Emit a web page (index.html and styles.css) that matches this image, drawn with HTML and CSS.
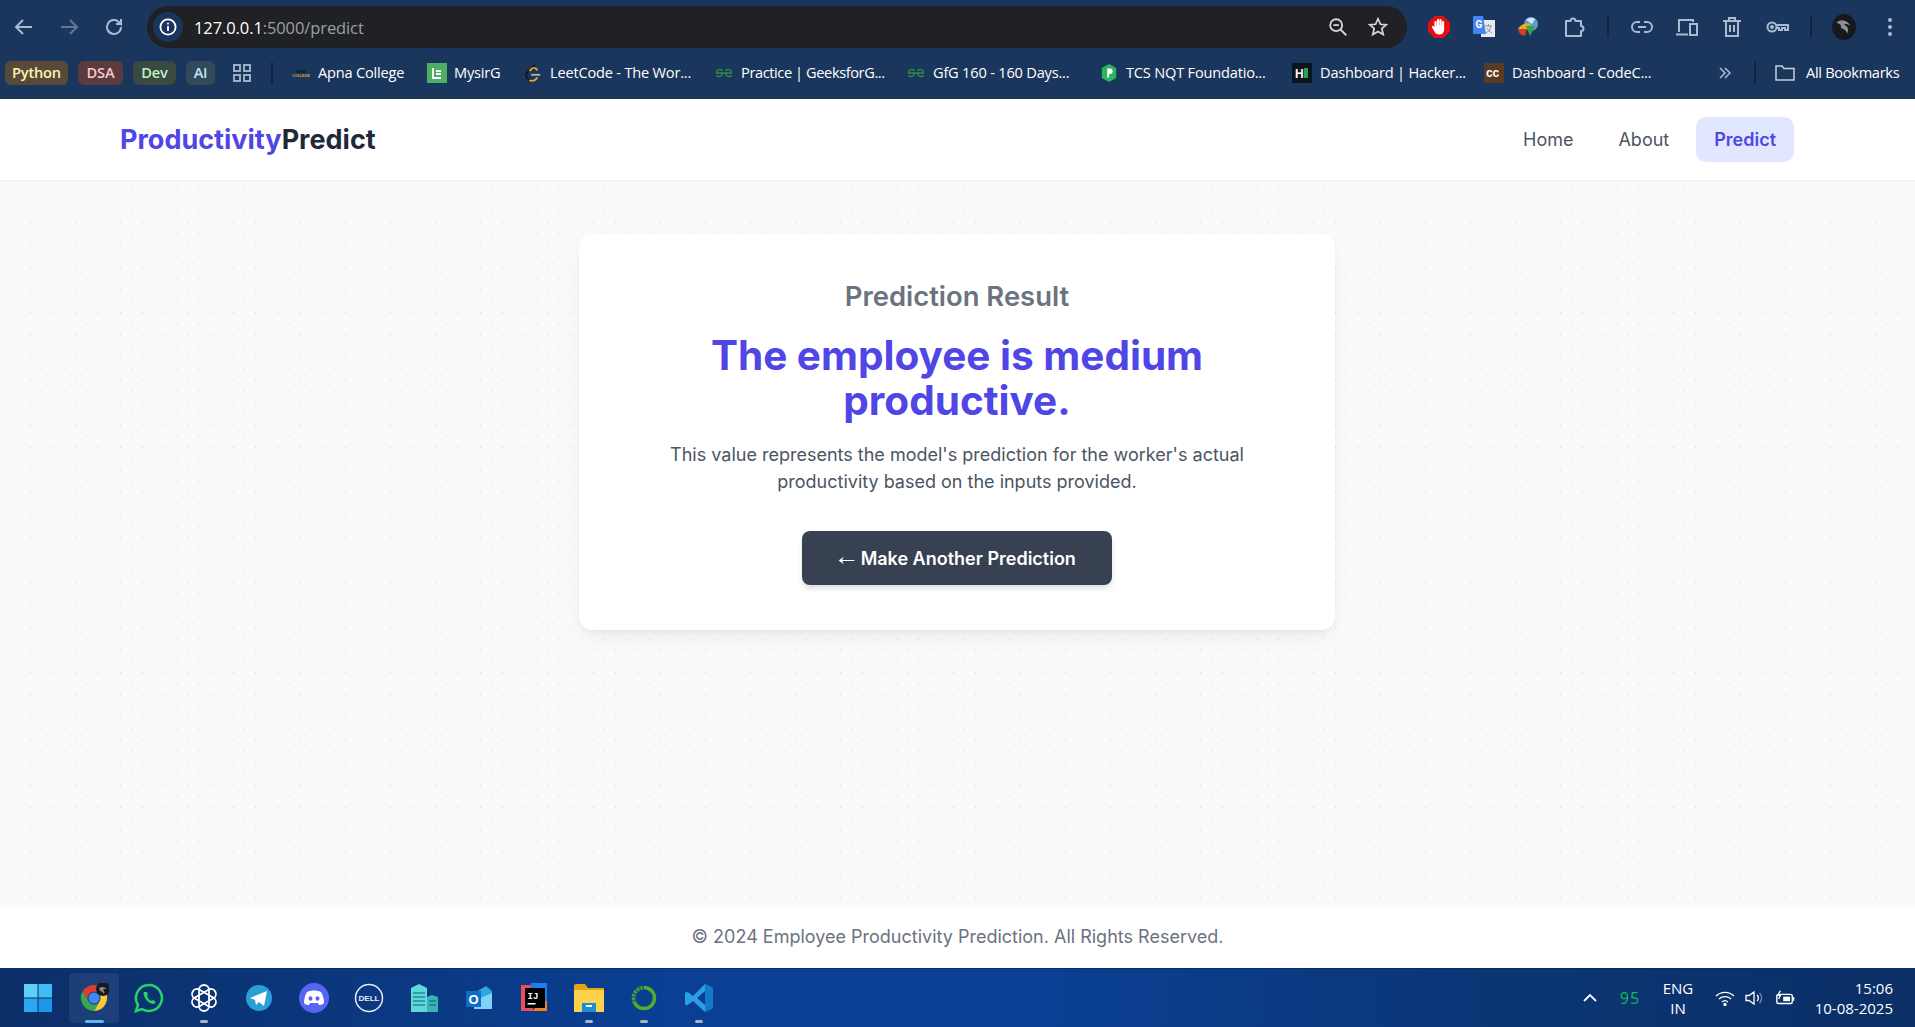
FILE: index.html
```html
<!DOCTYPE html>
<html lang="en">
<head>
<meta charset="utf-8">
<title>Prediction Result</title>
<link rel="stylesheet" href="styles.css">
</head>
<body>
<header class="browser">
  <div class="toolbar">
    <div class="tool-group nav-tools">
      <svg class="ti" viewBox="0 0 24 24" fill="none" stroke="#a9bad2" stroke-width="2"><path d="M20 12H5M11 5l-7 7 7 7"/></svg>
      <svg class="ti" viewBox="0 0 24 24" fill="none" stroke="#5f7799" stroke-width="2"><path d="M4 12h15M13 5l7 7-7 7"/></svg>
      <svg class="ti" viewBox="0 0 24 24" fill="none" stroke="#a9bad2" stroke-width="2"><path d="M19 12a7 7 0 1 1-2.2-5.1L19 9V4M19 9h-5"/></svg>
    </div>
    <div class="omnibox">
      <span class="site-info"><svg width="20" height="20" viewBox="0 0 20 20" fill="none" stroke="#fff" stroke-width="1.8"><circle cx="10" cy="10" r="7.6"/><path d="M10 9v5M10 5.8v1.8"/></svg></span>
      <span class="url"><span class="url-host">127.0.0.1</span>:5000/predict</span>
      <svg class="oi oi-zoom" viewBox="0 0 24 24" fill="none" stroke="#d5d7da" stroke-width="2"><circle cx="10" cy="10" r="6.5"/><path d="M7 10h6M15 15l6 6"/></svg>
      <svg class="oi" viewBox="0 0 24 24" fill="none" stroke="#d5d7da" stroke-width="1.9"><path d="M12 3l2.7 6 6.3.6-4.8 4.2 1.5 6.4L12 16.8 6.3 20.2l1.5-6.4L3 9.6 9.3 9z"/></svg>
    </div>
    <div class="tool-group ext-tools">
      <svg class="ti" viewBox="0 0 24 24"><path d="M7.500 1h9L23 7.500v9L16.500 23h-9L1 16.500v-9z" fill="#e20f13"/><g stroke="#fff" stroke-width="2.200" stroke-linecap="round"><path d="M8.500 7v7M11 5v8M13.500 5v8M16 7v8"/><path d="M6 12l3 5"/></g><ellipse cx="12.300" cy="15" rx="4.700" ry="4.500" fill="#fff"/></svg>
      <svg class="ti" viewBox="0 0 24 24"><rect x="9" y="5" width="14" height="17" fill="#e8eaed"/><path d="M13 11h7M16.500 9v2M19 11c-1 4-3 6-5 7M15 13c1 2 3 4 5 5" stroke="#8a8f96" fill="none"/><path d="M1 2a1 1 0 0 1 1-1h9l3 18H2a1 1 0 0 1-1-1z" fill="#4285f4"/><text x="3.500" y="13" font-family="Roboto" font-size="10" font-weight="700" fill="#fff">G</text></svg>
      <svg class="ti" viewBox="0 0 24 24"><circle cx="14" cy="9" r="7" fill="#5d9ad6"/><path d="M9 5a7 7 0 0 1 9-1l-3 5z" fill="#d5e4f2"/><path d="M1 14a10 8 0 0 1 13-5l-4 5z" fill="#e0b020"/><path d="M1 14a8 8 0 0 0 7 7l2-7z" fill="#d43c24"/><path d="M9 11h9l-5 10z" fill="#3ea63a"/></svg>
      <svg class="ti" viewBox="0 0 24 24" fill="none" stroke="#a9bad2" stroke-width="2"><path d="M4 6h4.500a2.500 2.500 0 0 1 5 0H19v5a2.500 2.500 0 0 1 0 5v5H4z" stroke-linejoin="round"/></svg>
      <span class="sep"></span>
      <svg class="ti" viewBox="0 0 24 24" fill="none" stroke="#a9bad2" stroke-width="2"><path d="M10 7H7a5 5 0 0 0 0 10h3M14 7h3a5 5 0 0 1 0 10h-3M8 12h8"/></svg>
      <svg class="ti" viewBox="0 0 24 24" fill="none" stroke="#a9bad2" stroke-width="2"><path d="M4 17V5h14v2M1 19.500h12M15 9h7v11h-7z"/></svg>
      <svg class="ti" viewBox="0 0 24 24" fill="none" stroke="#a9bad2" stroke-width="2"><path d="M3 6h18M9 6V3h6v3M6 6v15h12V6M10 10v7M14 10v7"/></svg>
      <svg class="ti" viewBox="0 0 24 24" fill="none" stroke="#a9bad2" stroke-width="2"><circle cx="7" cy="12" r="4.500"/><circle cx="7" cy="12" r="1"/><path d="M11.500 10H23v5h-3v-2h-3v2h-3v-2h-2.500"/></svg>
      <span class="sep"></span>
      <svg class="ti avatar" viewBox="0 0 24 24"><ellipse cx="12" cy="12" rx="11" ry="12" fill="#16181b"/><path d="M5 8c5-4 10-2 13 3-3-2-5-2-6-1 3 1 5 4 3 8-1-3-3-4-6-5 1-2 0-4-4-5z" fill="#8a9096"/></svg>
      <svg class="ti" viewBox="0 0 24 24" fill="#a9bad2"><circle cx="12" cy="5" r="2"/><circle cx="12" cy="12" r="2"/><circle cx="12" cy="19" r="2"/></svg>
    </div>
  </div>
  <div class="bookmarks">
    <span class="chip chip-python">Python</span>
    <span class="chip chip-dsa">DSA</span>
    <span class="chip chip-dev">Dev</span>
    <span class="chip chip-ai">AI</span>
    <svg class="apps" viewBox="0 0 18 18" fill="none" stroke="#a9bad2" stroke-width="1.800"><rect x="1" y="1" width="6" height="6"/><rect x="11" y="1" width="6" height="6"/><rect x="1" y="11" width="6" height="6"/><rect x="11" y="11" width="6" height="6"/></svg>
    <span class="sep sep-apps"></span>
    <span class="bm bm-apna"><svg class="fav" viewBox="0 0 18 18"><text x="9" y="8.500" text-anchor="middle" font-family="Liberation Sans" font-size="3.600" font-weight="700" fill="#0e1420">APNA</text><text x="9" y="12.500" text-anchor="middle" font-family="Liberation Sans" font-size="3.900" font-weight="700" fill="#e0a020">COLLEGE</text></svg>Apna College</span>
    <span class="bm bm-mysir"><svg class="fav" viewBox="0 0 20 20"><rect width="20" height="20" fill="#4caf63"/><path d="M6 5v10h8M9 8h5M9 11h5" stroke="#fff" stroke-width="1.800" fill="none"/></svg>MysirG</span>
    <span class="bm bm-leet"><svg class="fav" viewBox="0 0 18 20" fill="none" stroke-width="2"><path d="M11 1L3 9c-2 2-2 5 0 7l2 2" stroke="#111"/><path d="M5 8l3-3c1-1 3-1 4 0l2 2M5 18c2 1 5 1 7-1l2-2" stroke="#f0a020"/><path d="M7 12h10" stroke="#b3b3b3"/></svg>LeetCode - The Wor...</span>
    <span class="bm bm-gfg"><svg class="fav" viewBox="0 0 20 12" fill="none" stroke="#2f8d46" stroke-width="1.500"><path d="M10 6H1.500a4 4 0 0 1 7-2.500M10 6h8.500a4 4 0 0 0-7-2.500M8.500 6a4 4 0 0 1-7 2.500M11.500 6a4 4 0 0 0 7 2.500"/></svg>Practice | GeeksforG...</span>
    <span class="bm bm-gfg2"><svg class="fav" viewBox="0 0 20 12" fill="none" stroke="#2f8d46" stroke-width="1.500"><path d="M10 6H1.500a4 4 0 0 1 7-2.500M10 6h8.500a4 4 0 0 0-7-2.500M8.500 6a4 4 0 0 1-7 2.500M11.500 6a4 4 0 0 0 7 2.500"/></svg>GfG 160 - 160 Days...</span>
    <span class="bm bm-tcs"><svg class="fav" viewBox="0 0 18 20"><path d="M9 0l8 4.500v11L9 20l-8-4.500v-11z" fill="#2bb55d"/><path d="M7 5h3a3 3 0 0 1 0 6H9v4H7z" fill="#fff"/></svg>TCS NQT Foundatio...</span>
    <span class="bm bm-hr"><svg class="fav" viewBox="0 0 20 20"><rect width="20" height="20" fill="#0e141e"/><text x="3" y="14.500" font-family="Liberation Sans" font-size="12" font-weight="700" fill="#fff">H</text><rect x="12" y="5" width="4" height="10" fill="#1ba94c"/></svg>Dashboard | Hacker...</span>
    <span class="bm bm-cc"><svg class="fav" viewBox="0 0 20 20"><rect width="20" height="20" fill="#5b3a22"/><text x="2" y="14" font-family="Liberation Sans" font-size="12" font-weight="700" fill="#fff">cc</text></svg>Dashboard - CodeC...</span>
    <svg class="more" viewBox="0 0 14 14" fill="none" stroke="#a9bad2" stroke-width="1.500"><path d="M2 2l5 5-5 5M7 2l5 5-5 5"/></svg>
    <span class="sep sep-all"></span>
    <span class="bm bm-all"><svg class="folder" viewBox="0 0 20 18" fill="none" stroke="#c5cfdd" stroke-width="1.500"><path d="M1 2h6l2 2.500h10V16H1z"/></svg>All Bookmarks</span>
  </div>
</header>

<nav class="navbar">
  <a class="logo"><span class="logo-accent">Productivity</span>Predict</a>
  <div class="nav-links">
    <a class="nav-link">Home</a>
    <a class="nav-link">About</a>
    <a class="nav-link is-active">Predict</a>
  </div>
</nav>

<main class="content">
  <section class="card">
    <h2 class="card-label">Prediction Result</h2>
    <h1 class="card-result">The employee is medium productive.</h1>
    <p class="card-text">This value represents the model's prediction for the worker's actual productivity based on the inputs provided.</p>
    <a class="button"><span class="arrow">&larr;</span> Make Another Prediction</a>
  </section>
</main>

<footer class="footer">&copy; 2024 Employee Productivity Prediction. All Rights Reserved.</footer>

<div class="taskbar">
  <div class="task-icons">
    <span class="task"><svg class="tsk-img tsk-win" viewBox="0 0 30 30"><rect x="1" y="1" width="13.500" height="13.500" fill="#5fd0f5"/><rect x="15.500" y="1" width="13.500" height="13.500" fill="#3fbdf2"/><rect x="1" y="15.500" width="13.500" height="13.500" fill="#2ba9ee"/><rect x="15.500" y="15.500" width="13.500" height="13.500" fill="#1b96e8"/></svg></span>
    <span class="task is-open"><svg class="tsk-img" viewBox="0 0 30 30"><path d="M15 2a13 13 0 0 1 11.300 6.500H15z" fill="#e33b2e"/><path d="M3.700 8.500A13 13 0 0 1 15 2v6.500a6.500 6.500 0 0 0-5.600 9.700L3.700 8.500z" fill="#e33b2e"/><path d="M26.300 8.500A13 13 0 0 1 15 28l5.600-9.700A6.500 6.500 0 0 0 15 8.500z" fill="#fcc934"/><path d="M3.700 8.500L9.400 18.300a6.500 6.500 0 0 0 11.200 0L15 28A13 13 0 0 1 3.700 8.500z" fill="#34a853"/><circle cx="15" cy="15" r="5.500" fill="#4285f4"/><circle cx="24" cy="6" r="7" fill="#17191c"/><path d="M20 5c3-2 6-1 8 1-2-.5-3 0-4 1 1 1 2 2 1 4-1-2-3-3-4-3z" fill="#888"/></svg><span class="run wide"></span></span>
    <span class="task"><svg class="tsk-img" viewBox="0 0 30 30" fill="none"><path d="M15 2a13 13 0 0 0-11 20L2 28l6-2a13 13 0 1 0 7-24z" stroke="#25d366" stroke-width="2.500"/><path d="M10 9c-2 3 3 11 9 12 2 0 3-2 2-3l-3-1-1 1c-2-1-3-3-4-5l1-1-1-3z" fill="#25d366"/></svg></span>
    <span class="task"><svg class="tsk-img" viewBox="0 0 30 30" fill="none" stroke="#fff" stroke-width="1.800"><rect x="10" y="2" width="10" height="26" rx="5"/><rect x="10" y="2" width="10" height="26" rx="5" transform="rotate(60 15 15)"/><rect x="10" y="2" width="10" height="26" rx="5" transform="rotate(120 15 15)"/></svg><span class="run"></span></span>
    <span class="task"><svg class="tsk-img" viewBox="0 0 30 30"><circle cx="15" cy="15" r="13" fill="#2a9fd6"/><path d="M6 15l17-7-3 15-5-4-3 3-1-5z" fill="#fff"/></svg></span>
    <span class="task"><svg class="tsk-img" viewBox="0 0 30 30"><circle cx="15" cy="15" r="15" fill="#5865f2"/><path d="M8 9c5-2 9-2 14 0 2 3 3 7 3 11-2 2-4 2-5 2l-1-2H11l-1 2c-1 0-3 0-5-2 0-4 1-8 3-11z" fill="#fff"/><ellipse cx="11.500" cy="15.500" rx="2" ry="2.300" fill="#5865f2"/><ellipse cx="18.500" cy="15.500" rx="2" ry="2.300" fill="#5865f2"/></svg></span>
    <span class="task"><svg class="tsk-img" viewBox="0 0 30 30" fill="none"><circle cx="15" cy="15" r="13.500" stroke="#e6edf7" stroke-width="1.500"/><text x="15" y="18" text-anchor="middle" font-family="Liberation Sans" font-size="8" font-weight="700" fill="#e6edf7">DELL</text></svg></span>
    <span class="task"><svg class="tsk-img" viewBox="0 0 30 30"><path d="M2 5l8-4 8 4v24H2z" fill="#5fd8d8"/><path d="M18 14l5-2 6 2v15H18z" fill="#3ab3b8"/><path d="M4 10h12M4 14h12M4 18h12M4 22h12M20 18h7M20 22h7" stroke="#0d5a78" stroke-width="1.200"/></svg></span>
    <span class="task"><svg class="tsk-img" viewBox="0 0 30 30"><path d="M10 10l12-7 6 5v18H10z" fill="#2da7e0"/><path d="M10 18l18-8v16H10z" fill="#7fd3f5"/><rect x="2" y="8" width="15" height="16" fill="#0f6fc6"/><text x="9.500" y="21" text-anchor="middle" font-family="Liberation Sans" font-size="13" font-weight="700" fill="#fff">O</text></svg></span>
    <span class="task"><svg class="tsk-img" viewBox="0 0 30 30"><path d="M2 2h12v26H2z" fill="#f04a5e"/><path d="M12 0h16v20H12z" fill="#1c7ff0"/><path d="M20 18h8v10H14z" fill="#f58020"/><rect x="6" y="5" width="20" height="20" fill="#000"/><text x="8.500" y="16" font-family="Liberation Mono" font-size="9" font-weight="700" fill="#fff">IJ</text><rect x="8.500" y="20" width="8" height="1.500" fill="#fff"/></svg></span>
    <span class="task"><svg class="tsk-img" viewBox="0 0 30 30"><path d="M0 3a2 2 0 0 1 2-2h9l3 4h16v5H0z" fill="#e3a312"/><path d="M0 7h30v22H0z" fill="#fcd24c"/><rect x="8" y="20" width="14" height="9" fill="#1a8fd6"/><rect x="12" y="22" width="6" height="2" fill="#fff"/></svg><span class="run"></span></span>
    <span class="task"><svg class="tsk-img" viewBox="0 0 30 30" fill="none" stroke-width="3.500"><circle cx="15" cy="15" r="10.500" stroke="#4fae2f"/><path d="M15 4.500A10.500 10.500 0 0 0 6 20" stroke="#1a6e54" stroke-dasharray="2 1.500"/></svg><span class="run"></span></span>
    <span class="task"><svg class="tsk-img" viewBox="0 0 30 30"><path d="M21 1l8 4v20l-8 4-12-11-6 4.500-2-1.500V10l2-1.500L9 13z" fill="#2a9ee8"/><path d="M21 8l-8 7 8 7z" fill="#0a3d8f"/><path d="M21 1l8 4v20l-8 4z" fill="#1278c8"/></svg><span class="run"></span></span>
  </div>
  <div class="tray">
    <svg class="tray-caret" viewBox="0 0 16 10" fill="none" stroke="#fff" stroke-width="1.800"><path d="M2 8l6-6 6 6"/></svg>
    <span class="tray-temp">95</span>
    <span class="tray-lang">ENG<br>IN</span>
    <svg class="tray-icon tray-wifi" viewBox="0 0 20 16" fill="none" stroke="#fff" stroke-width="1.300"><path d="M1 6a13 13 0 0 1 18 0M4 9a9 9 0 0 1 12 0M7 12a4.500 4.500 0 0 1 6 0"/><circle cx="10" cy="14.500" r="1" fill="#fff"/></svg>
    <svg class="tray-icon tray-vol" viewBox="0 0 20 16" fill="none" stroke="#fff" stroke-width="1.300"><path d="M1 5.500h3L9 2v12l-5-3.500H1zM12 5a4 4 0 0 1 0 6"/><path d="M14.500 3a7 7 0 0 1 0 10" stroke-opacity=".45"/></svg>
    <svg class="tray-icon" viewBox="0 0 22 16" fill="none" stroke="#fff" stroke-width="1.500"><rect x="2" y="4" width="17" height="10" rx="2"/><rect x="9" y="6.500" width="7.500" height="5" fill="#fff" stroke="none"/><path d="M20.500 7v4M6 0L3 5h3l-2 4"/></svg>
    <span class="tray-clock">15:06<br>10-08-2025</span>
  </div>
</div>
</body>
</html>
```
FILE: styles.css
```css
* { box-sizing: border-box; }
html, body { height: 100%; margin: 0; }
body {
  display: flex;
  flex-direction: column;
  font-family: Inter, "Liberation Sans", sans-serif;
  background: #f9fafb;
  overflow: hidden;
}

/* browser chrome */
.browser {
  height: 99px;
  flex: none;
  background: #1a365d;
  font-family: "Open Sans", "Liberation Sans", sans-serif;
  color: #fff;
}
.toolbar {
  height: 54px;
  padding-top: 6px;
  display: flex;
  align-items: flex-start;
}
.tool-group { display: flex; align-items: center; height: 42px; }
.ti { width: 24px; height: 24px; flex: none; }
.nav-tools { width: 147px; padding-left: 12px; gap: 21px; }
.omnibox {
  width: 1260px;
  height: 42px;
  background: #202124;
  border-radius: 21px;
  display: flex;
  align-items: center;
  padding: 0 18px 0 6px;
  gap: 17px;
}
.site-info {
  width: 30px;
  height: 30px;
  border-radius: 50%;
  background: #1a365d;
  display: flex;
  align-items: center;
  justify-content: center;
  flex: none;
}
.url {
  flex: 1;
  margin-left: -6px;
  margin-right: 3px;
  font-size: 16.500px;
  letter-spacing: -0.1px;
  color: #9aa0a6;
}
.url-host { color: #fff; }
.oi { width: 22px; height: 22px; flex: none; }
.oi-zoom { margin: 0 1px 0 -1px; }
.ext-tools { padding-left: 20px; gap: 21px; }
.sep { width: 2px; height: 22px; background: #102444; flex: none; }
.avatar { width: 26px; height: 26px; margin-left: -2px; }
.bookmarks {
  height: 45px;
  padding: 7px 0 0 5px;
  display: flex;
  align-items: flex-start;
  font-size: 14.600px;
  letter-spacing: -0.2px;
}
.chip {
  height: 24px;
  margin-right: 10px;
  border-radius: 6px;
  font-weight: 600;
  line-height: 22px;
  text-align: center;
}
.chip-python { width: 63px; background: #574a38; color: #fdf3b0; }
.chip-dsa { width: 45px; background: #5b3a40; color: #fbc9c0; }
.chip-dev { width: 43px; background: #3a4a40; color: #bff0c8; }
.chip-ai { width: 29px; background: #33495a; color: #bfe4f5; }
.apps { width: 18px; height: 18px; margin: 3px 0 0 8px; }
.sep-apps { margin: 1px 0 0 20px; }
.bm {
  display: flex;
  align-items: center;
  height: 22px;
  white-space: nowrap;
  flex: none;
}
.fav { width: 18px; height: 18px; margin: 2px 8px 0 0; flex: none; }
.bm-apna { margin-left: 19px; width: 116px; }
.bm-mysir { margin-left: 19px; width: 76px; }
.bm-mysir .fav { width: 20px; height: 20px; margin-right: 7px; }
.bm-leet { margin-left: 21px; width: 169px; }
.bm-gfg { margin-left: 22px; width: 170px; letter-spacing: -0.4px; }
.bm-gfg2 { margin-left: 22px; width: 166px; }
.bm-tcs { margin-left: 27px; width: 167px; }
.bm-hr { margin-left: 25px; width: 169px; }
.bm-cc { margin-left: 23px; width: 169px; }
.bm-hr .fav, .bm-cc .fav { width: 20px; height: 20px; }
.more { width: 14px; height: 14px; margin: 5px 0 0 65px; flex: none; }
.sep-all { margin: 1px 0 0 22px; }
.bm-all { margin-left: 19px; letter-spacing: -0.3px; }
.folder { width: 20px; height: 18px; margin: 2px 11px 0 0; }

/* page nav */
.navbar {
  height: 82px;
  flex: none;
  background: #fff;
  border-bottom: 1px solid #f1f2f5;
  padding: 0 121px 0 120px;
  display: flex;
  align-items: center;
  justify-content: space-between;
}
.logo { font-size: 27px; font-weight: 700; color: #1f2937; }
.logo-accent { color: #4f46e5; }
.nav-links { display: flex; gap: 9px; }
.nav-link {
  height: 45px;
  padding: 0 18px;
  border-radius: 10px;
  font-size: 18px;
  font-weight: 400;
  line-height: 45px;
  color: #4b5563;
}
.is-active { background: #e0e7ff; color: #4f46e5; font-weight: 600; }

/* main */
.content {
  flex: 1;
  padding: 53px 1px 0 0;
  display: flex;
  justify-content: center;
  align-items: flex-start;
  background-color: #f9fafb;
  background-image:
    radial-gradient(circle, #d4d7dd 0.7px, transparent 1px),
    radial-gradient(circle, #d4d7dd 0.7px, transparent 1px);
  background-size: 22.500px 22.500px;
  background-position: 8px -3.500px, -3.200px 7.750px;
}
.card {
  width: 756px;
  height: 396px;
  padding: 45px;
  background: #fff;
  border-radius: 14px;
  box-shadow: 0 9px 22px -5px rgba(0, 0, 0, 0.08), 0 4px 8px -4px rgba(0, 0, 0, 0.06);
  text-align: center;
}
.card-label {
  margin: 0 0 20px;
  font-size: 27.400px;
  line-height: 34px;
  font-weight: 600;
  color: #6b7280;
}
.card-result {
  margin: 0 0 18px;
  font-size: 40.500px;
  line-height: 45px;
  font-weight: 700;
  color: #4f46e5;
}
.card-text {
  margin: 0 0 36px;
  font-size: 18px;
  line-height: 27px;
  color: #4b5563;
}
.button {
  display: inline-block;
  width: 310px;
  height: 54px;
  border-radius: 8px;
  background: #374151;
  box-shadow: 0 4px 6px -1px rgba(0, 0, 0, 0.15);
  color: #fff;
  font-size: 18px;
  font-weight: 600;
  line-height: 56px;
}
.arrow {
  margin: 0 -3.500px 0 -4px;
  font-family: "Liberation Sans", sans-serif;
  font-size: 25.500px;
  font-weight: 400;
  line-height: 0;
}

/* footer */
.footer {
  height: 63px;
  flex: none;
  background: #fff;
  text-align: center;
  font-size: 18px;
  line-height: 64px;
  color: #6b7280;
}

/* taskbar */
.taskbar {
  height: 59px;
  flex: none;
  display: flex;
  align-items: stretch;
  justify-content: space-between;
  background: linear-gradient(90deg, #0c2f68 0%, #0a3f93 35%, #0a3f93 55%, #0b3675 78%, #0b2f66 100%);
  border-top: 1px solid #0b2c60;
  color: #fff;
  font-family: "Open Sans", "Liberation Sans", sans-serif;
}
.task-icons { display: flex; padding: 4px 0 0 14px; gap: 5px; }
.task {
  position: relative;
  width: 50px;
  height: 50px;
  border-radius: 5px;
  display: flex;
  align-items: center;
  justify-content: center;
}
.is-open { background: rgba(255, 255, 255, 0.07); }
.tsk-img { width: 30px; height: 30px; }
.tsk-win { margin-right: 3px; }
.run {
  position: absolute;
  left: 21px;
  bottom: 0;
  width: 8px;
  height: 3px;
  border-radius: 2px;
  background: #a8b4c6;
}
.wide { left: 16px; width: 19px; background: #5fb8f5; }
.tray { display: flex; align-items: center; padding-right: 22px; font-size: 15px; line-height: 20px; text-align: center; }
.tray-caret { width: 16px; height: 10px; margin-right: 21px; }
.tray-temp { color: #12b85d; font-size: 16px; letter-spacing: 1px; width: 22px; margin-right: 19px; }
.tray-lang { width: 36px; margin-right: 19px; }
.tray-icon { width: 20px; height: 16px; }
.tray-wifi { margin-right: 10px; }
.tray-vol { margin-right: 10px; }
.tray-clock { margin-left: 8px; text-align: right; width: 90px; }
```
